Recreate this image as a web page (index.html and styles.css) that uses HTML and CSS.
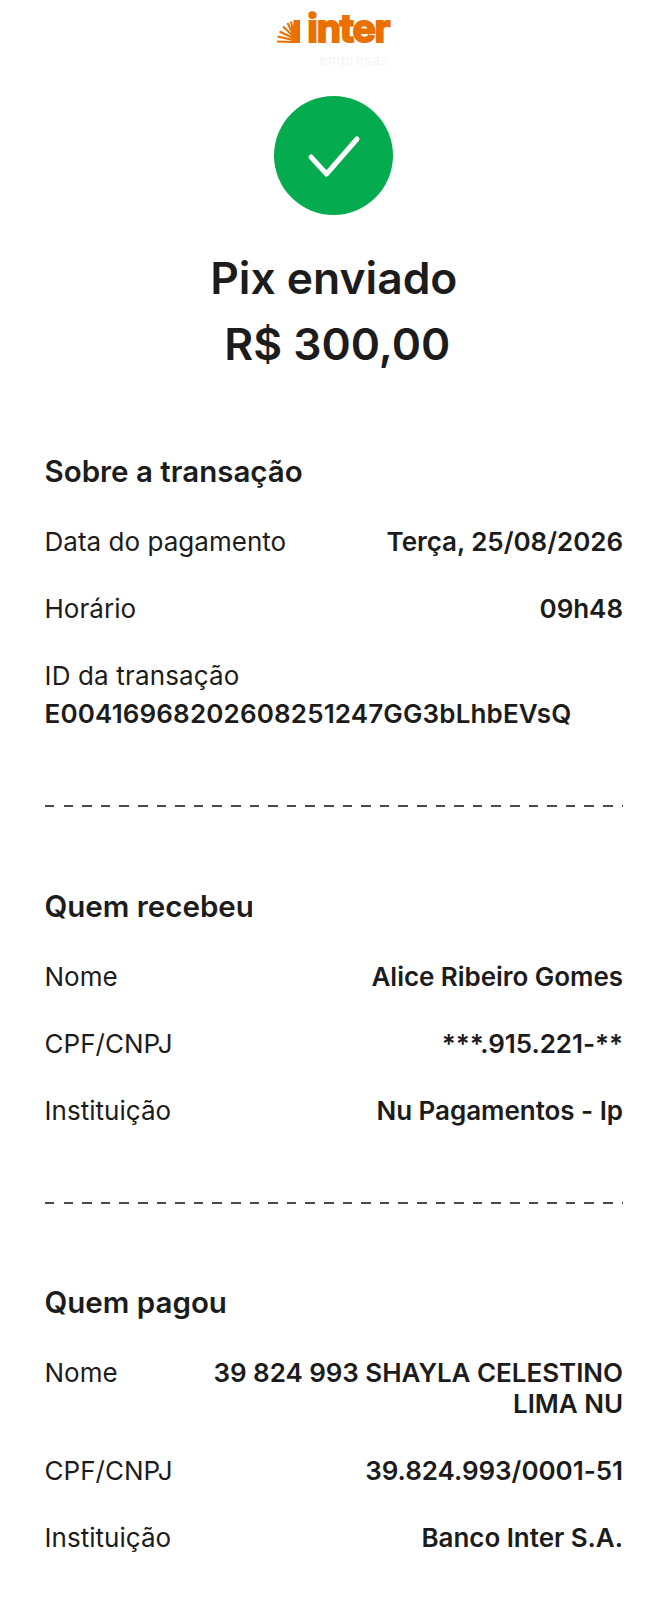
FILE: index.html
```html
<!DOCTYPE html>
<html lang="pt-BR">

<head>
  <meta charset="UTF-8">
  <meta name="viewport" content="width=device-width, initial-scale=1.0">
  <title>Pix enviado</title>
  <link rel="stylesheet" href="styles.css">
</head>

<body>
  <header class="logo">
    <div class="logo-row">
      <svg width="23" height="23" viewBox="0 0 23 23">
        <path d="M16.500 0H23V23H15z" fill="#ea7100" />
        <path d="M16 22L0 21.500M16 20L.5 16.500M16 18L2.500 11.500M16 16L6 6.500M16 14L10.500 3M16 12L14 1.500" fill="none" stroke="#ea7100" stroke-width="2" />
      </svg>
      <span class="logo-name">inter</span>
    </div>
    <span class="logo-sub">empresas</span>
  </header>

  <div class="status">
    <svg width="119" height="119" viewBox="0 0 119 119">
      <circle cx="59.5" cy="59.5" r="59.5" fill="#05ab4f" />
      <path d="M37 61l15.500 17 30.500-35" fill="none" stroke="#fff" stroke-width="5" stroke-linecap="round" stroke-linejoin="round" />
    </svg>
    <h1>Pix enviado</h1>
    <p class="amount">R$ 300,00</p>
  </div>

  <section class="block">
    <h2>Sobre a transação</h2>
    <div class="row"><span>Data do pagamento</span><strong>Terça, 25/08/2026</strong></div>
    <div class="row"><span>Horário</span><strong>09h48</strong></div>
    <div class="stack"><span>ID da transação</span><strong>E00416968202608251247GG3bLhbEVsQ</strong></div>
  </section>

  <div class="dashes"></div>

  <section class="block">
    <h2>Quem recebeu</h2>
    <div class="row"><span>Nome</span><strong>Alice Ribeiro Gomes</strong></div>
    <div class="row"><span>CPF/CNPJ</span><strong>***.915.221-**</strong></div>
    <div class="row"><span>Instituição</span><strong>Nu Pagamentos - Ip</strong></div>
  </section>

  <div class="dashes"></div>

  <section class="block">
    <h2>Quem pagou</h2>
    <div class="row"><span>Nome</span><strong>39 824 993 SHAYLA CELESTINO<br>LIMA NU</strong></div>
    <div class="row"><span>CPF/CNPJ</span><strong>39.824.993/0001-51</strong></div>
    <div class="row"><span>Instituição</span><strong>Banco Inter S.A.</strong></div>
  </section>
</body>

</html>
```

FILE: styles.css
```css
body {
  font-family: Inter, "Noto Sans", sans-serif;
  margin: 0;
  padding: 0 45px 0 44.5px;
  background-color: #fff;
  color: #1c1c1c;
}

.logo {
  display: flex;
  flex-direction: column;
  align-items: center;
  padding-top: 10px;
  height: 83px;
  box-sizing: border-box;
}

.logo-row {
  display: flex;
  align-items: flex-end;
  gap: 7px;
  height: 33px;
  margin-left: -1px;
}

.logo-name {
  font-size: 39px;
  line-height: 30px;
  font-weight: 700;
  letter-spacing: -1.2px;
  color: #ea7100;
  -webkit-text-stroke: 2px #ea7100;
}

.logo-sub {
  font-size: 13px;
  line-height: 14px;
  letter-spacing: 1.1px;
  margin: 10px 0 0 41px;
  color: #f4f4f4;
}

.status {
  display: flex;
  flex-direction: column;
  align-items: center;
  padding-top: 13px;
}

h1 {
  font-size: 44.4px;
  line-height: 66px;
  font-weight: 600;
  margin: 30px 0 0;
}

.amount {
  font-size: 44.4px;
  line-height: 60px;
  font-weight: 600;
  margin: 3px 0 0 7px;
}

.block {
  padding-top: 78.5px;
}

.status + .block {
  padding-top: 77px;
}

h2 {
  font-size: 29.5px;
  line-height: 40px;
  font-weight: 600;
  margin: 0 0 18px;
}

.row {
  display: flex;
  justify-content: space-between;
  gap: 24px;
  font-size: 26px;
  line-height: 31px;
  padding: 17px 0 19px;
  letter-spacing: 0.03px;
}

.row:last-child {
  padding-bottom: 4px;
}

.row strong {
  font-weight: 600;
  text-align: right;
  letter-spacing: -0.04px;
}

.stack {
  display: flex;
  flex-direction: column;
  font-size: 26px;
  line-height: 38px;
  padding-top: 14px;
  letter-spacing: 0.15px;
}

.stack strong {
  font-weight: 600;
}

.dashes {
  height: 2px;
  margin-top: 72px;
  background-image: repeating-linear-gradient(to right, #4a4a4a 0, #4a4a4a 9.5px, transparent 9.5px, transparent 18.6px);
}
```
